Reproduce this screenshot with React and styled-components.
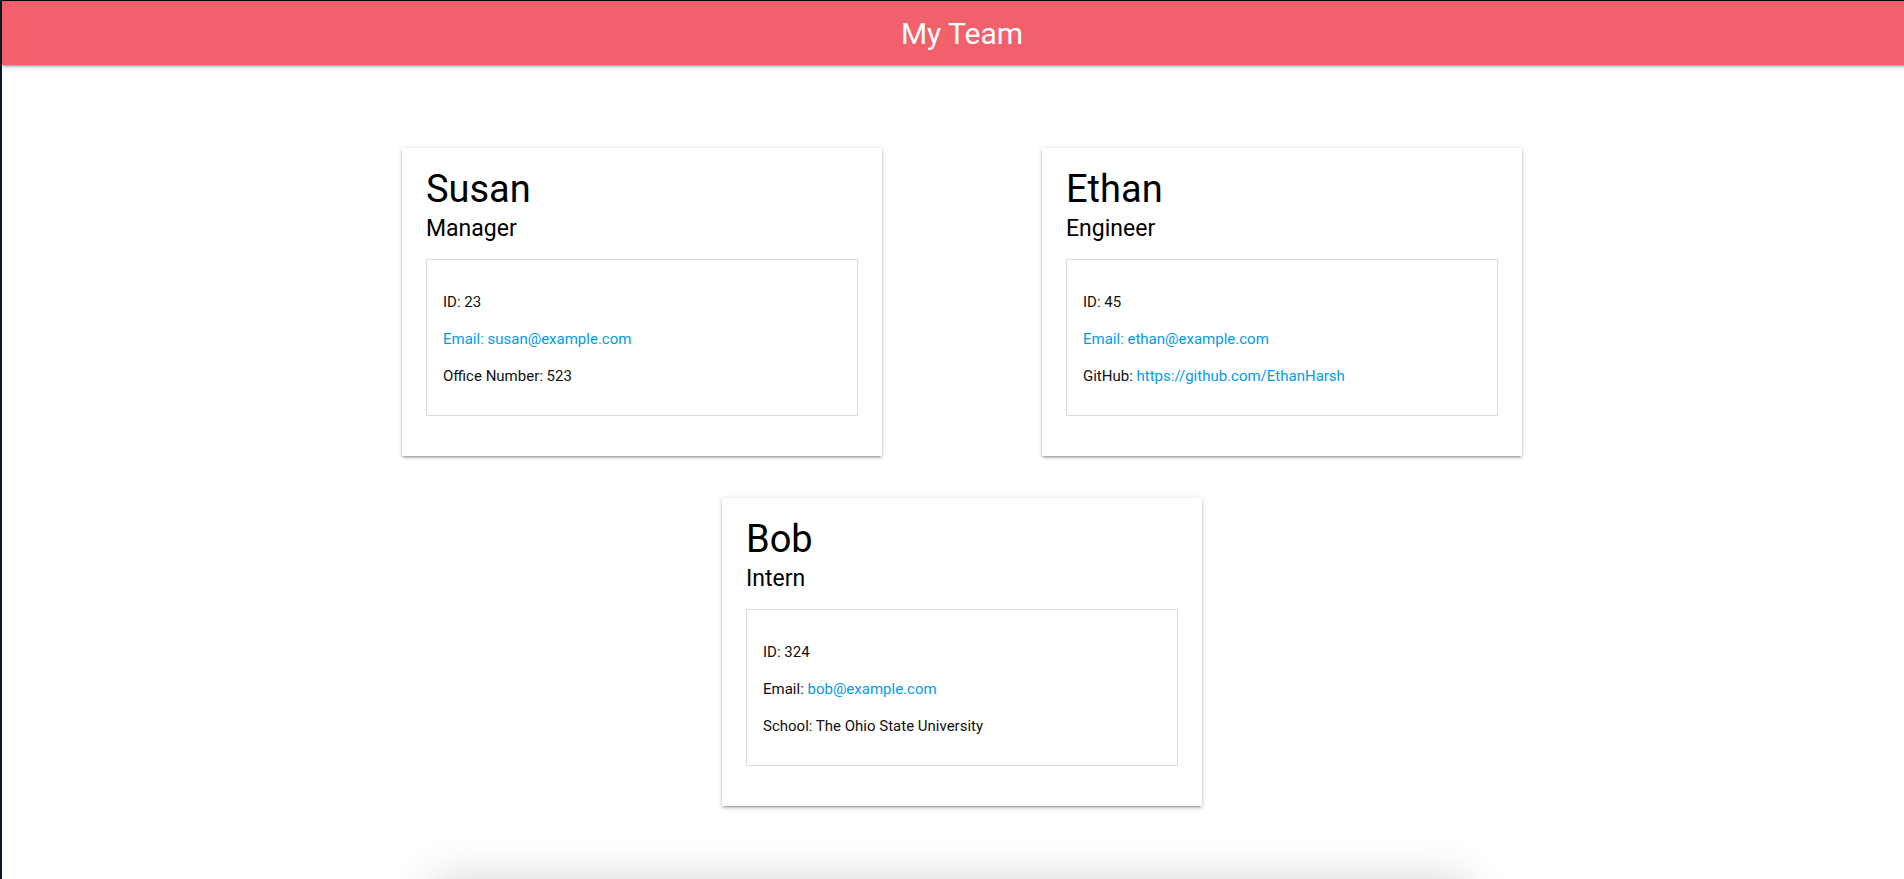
import styled, { createGlobalStyle } from "styled-components";

const team = [
  {
    name: "Susan",
    role: "Manager",
    id: 23,
    email: "susan@example.com",
    emailStyle: "full",
    extra: { label: "Office Number", value: "523" },
  },
  {
    name: "Ethan",
    role: "Engineer",
    id: 45,
    email: "ethan@example.com",
    emailStyle: "full",
    extra: { label: "GitHub", value: "https://github.com/EthanHarsh", link: true },
  },
  {
    name: "Bob",
    role: "Intern",
    id: 324,
    email: "bob@example.com",
    emailStyle: "value",
    extra: { label: "School", value: "The Ohio State University" },
  },
];

function App() {
  return (
    <>
      <GlobalStyle />
      <Frame>
        <Header>My Team</Header>
        <CardGrid>
          {team.map((member) => (
            <Card key={member.id}>
              <Name>{member.name}</Name>
              <Role>{member.role}</Role>
              <Details>
                <Line>ID: {member.id}</Line>
                {member.emailStyle === "full" ? (
                  <Line>
                    <Link href={`mailto:${member.email}`}>Email: {member.email}</Link>
                  </Line>
                ) : (
                  <Line>
                    Email: <Link href={`mailto:${member.email}`}>{member.email}</Link>
                  </Line>
                )}
                <Line>
                  {member.extra.label}:{" "}
                  {member.extra.link ? (
                    <Link href={member.extra.value}>{member.extra.value}</Link>
                  ) : (
                    member.extra.value
                  )}
                </Line>
              </Details>
            </Card>
          ))}
        </CardGrid>
      </Frame>
      <DockShadow />
    </>
  );
}

const GlobalStyle = createGlobalStyle`
  html, body {
    margin: 0;
    padding: 0;
    overflow: hidden;
    background: #ffffff;
  }
  body {
    font-family: Roboto, "Liberation Sans", sans-serif;
    color: #111;
  }
`;

const Frame = styled.div`
  width: 1920px;
  min-height: 878px;
  border-left: 2px solid #0b1824;
  border-top: 1px solid #000;
  background: #fff;
`;

const Header = styled.header`
  height: 64px;
  display: flex;
  align-items: center;
  justify-content: center;
  background: #f2616b;
  color: #fff;
  font-size: 30px;
  font-weight: 400;
  box-shadow: 0 2px 2px 0 rgba(0, 0, 0, 0.14), 0 3px 1px -2px rgba(0, 0, 0, 0.12),
    0 1px 5px 0 rgba(0, 0, 0, 0.2);
  position: relative;
`;

const CardGrid = styled.main`
  width: 1120px;
  margin: 83px auto 0;
  display: flex;
  flex-wrap: wrap;
  justify-content: center;
  column-gap: 160px;
  row-gap: 42px;
`;

const Card = styled.section`
  width: 480px;
  box-sizing: border-box;
  padding: 20px 24px 24px;
  background: #fff;
  box-shadow: 0 2px 2px 0 rgba(0, 0, 0, 0.14), 0 3px 1px -2px rgba(0, 0, 0, 0.12),
    0 1px 5px 0 rgba(0, 0, 0, 0.2);
`;

const Name = styled.h2`
  margin: 0;
  font-size: 38px;
  line-height: 42px;
  font-weight: 400;
  color: #000;
`;

const Role = styled.h3`
  margin: 5px 0 16px;
  font-size: 23px;
  line-height: 28px;
  font-weight: 400;
  color: #000;
`;

const Details = styled.div`
  border: 1px solid #dcdcdc;
  padding: 16px 16px 13px;
  margin-bottom: 16px;
`;

const Line = styled.p`
  margin: 15px 0;
  font-size: 15px;
  line-height: 22px;
  color: #111;
`;

const Link = styled.a`
  color: #039be5;
  text-decoration: none;
`;

const DockShadow = styled.div`
  position: fixed;
  left: 430px;
  width: 1040px;
  bottom: -40px;
  height: 40px;
  border-radius: 30px;
  box-shadow: 0 0 40px 4px rgba(0, 0, 0, 0.14);
`;

export default App;
